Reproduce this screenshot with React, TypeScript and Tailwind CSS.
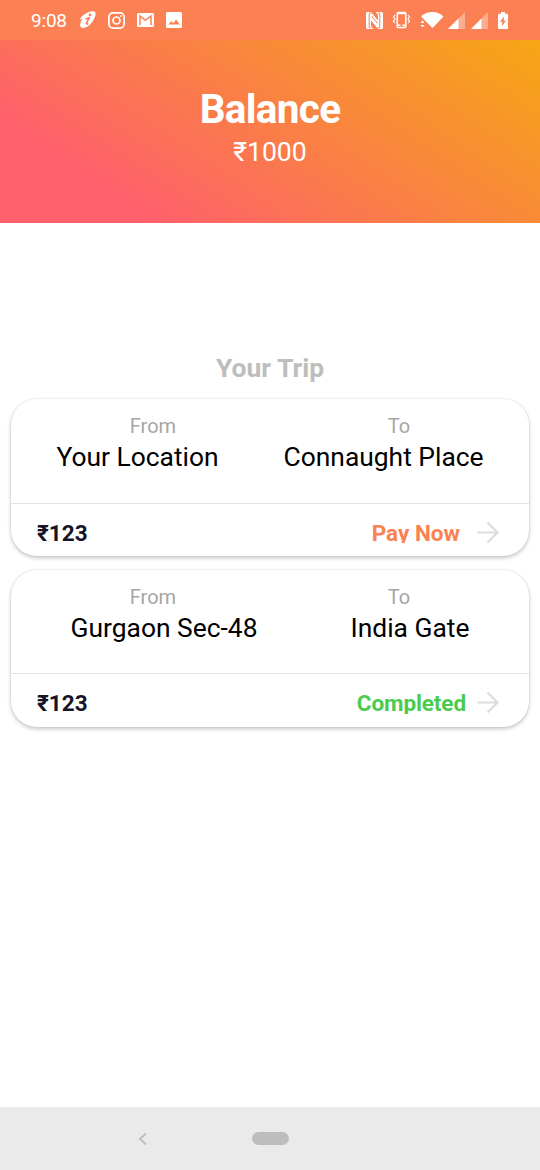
import React from "react";

type Trip = { from: string; to: string; fare: string; status: string; tone: string };

const trips: Trip[] = [
  { from: "Your Location", to: "Connaught Place", fare: "₹123", status: "Pay Now", tone: "text-[#f98253] mr-[1px] tracking-[0px]" },
  { from: "Gurgaon Sec-48", to: "India Gate", fare: "₹123", status: "Completed", tone: "text-[#4bcb4e] mr-[-5px] tracking-[-0.1px]" },
];

function StatusBar() {
  return (
    <div className="flex h-10 items-center bg-[#fb8155] pl-[31px] text-white">
      <span className="w-[37px] pt-px text-[19px] leading-[39px] tracking-[-0.2px]">9:08</span>
      <svg className="ml-[11px] h-[18px] w-[18px]" viewBox="0 0 18 18">
        <path d="M9 1.500C12 0 15.500 0 16.300 1.200c1.200 2.300-1.500 8.500-5 12C8 16.700 3.500 17.800 2 16.300.5 14.800 1.200 11 3.500 8L.8 8.500C2.500 5 5.500 2.800 9 1.500Z" fill="currentColor" />
        <path d="M6.500 8 10 6.800 7.700 12q-.5 1.800 1.500 .3" fill="none" stroke="#fb8155" strokeWidth="1.600" />
        <circle cx="11" cy="3.900" r="1.300" fill="#fb8155" />
      </svg>
      <svg className="ml-[11px] h-[17px] w-[17px]" viewBox="0 0 17 17" fill="none" stroke="currentColor" strokeWidth="1.700">
        <rect x=".9" y=".9" width="15.200" height="15.200" rx="4" />
        <circle cx="8.500" cy="8.500" r="3.500" />
        <circle cx="13" cy="4" r=".5" fill="currentColor" strokeWidth="1" />
      </svg>
      <svg className="ml-3 h-[14px] w-[17px]" viewBox="0 0 17 14">
        <rect width="17" height="14" rx="1.500" fill="currentColor" />
        <path d="M3 12V3L8.500 7.300 14 3v9" fill="none" stroke="#fb8155" strokeWidth="1.500" />
      </svg>
      <svg className="ml-3 h-[16px] w-[16px]" viewBox="0 0 16 16">
        <rect width="16" height="16" rx="1.500" fill="currentColor" />
        <path d="m2.500 12.500 2.800-3.500 2 2.300 2.800-3.800 3.700 5Z" fill="#fb8155" />
      </svg>
      <svg className="ml-[184px] h-[17px] w-[17px]" viewBox="0 0 17 17">
        <path d="M1.500 0H5l7 8.500V3.300L9.800 0H15.500Q17 0 17 1.500V15.500Q17 17 15.500 17H12L5 8.500v5.200L7.200 17H1.500Q0 17 0 15.500V1.500Q0 0 1.500 0Z" fill="currentColor" />
        <path d="M5.500 1.200H3.200v14.600h2M11.500 15.800h2.300V1.200h-2" fill="none" stroke="#fb8155" strokeWidth="1" />
        <path d="m5.500 4 6 7.300" stroke="#fb8155" strokeWidth="1" />
      </svg>
      <svg className="ml-[9px] h-[18px] w-[19px]" viewBox="0 0 19 18" fill="none" stroke="currentColor" strokeWidth="1.500">
        <rect x="5.200" y="1.500" width="8.600" height="15" rx="1" />
        <path d="M5 14.200h3.500M10.500 14.200H14M5 2.500h9" />
        <path d="m3 4-1.500 2L3 8l-1.500 2L3 12M16 4l1.500 2L16 8l1.500 2-1.500 2" strokeWidth="1.200" />
      </svg>
      <svg className="ml-[9px] h-[18px] w-[24px]" viewBox="0 0 24 18" fill="currentColor">
        <path d="M1 5.500C7.500-.4 17-.4 23.500 5.500L12.500 17Z" />
        <path d="m.5 12 2-2.500 2 2.500ZM.5 14h4l-2 2.500Z" />
      </svg>
      <svg className="ml-[4px] h-[17px] w-[17px]" viewBox="0 0 17 17" fill="currentColor">
        <path d="M0 17 17 0v17Z" opacity=".35" /><path d="M0 17 10.500 6.500V17Z" />
      </svg>
      <svg className="ml-[6px] h-[17px] w-[17px]" viewBox="0 0 17 17" fill="currentColor">
        <path d="M0 17 17 0v17Z" opacity=".35" /><path d="M0 17 10.500 6.500V17Z" />
      </svg>
      <svg className="ml-[10px] h-[17px] w-[10px]" viewBox="0 0 10 17">
        <path d="M3 0h4v1.700h2q1 0 1 1V16q0 1-1 1H1q-1 0-1-1V2.700q0-1 1-1h2Z" fill="currentColor" />
        <path d="m6 4.500-4 5.300h2.300l-.3 4.200 4-5.300H5.700Z" fill="#fb8155" />
      </svg>
    </div>
  );
}

function TripCard({ from, to, fare, status, tone }: Trip) {
  return (
    <article className="flex h-[157px] flex-col rounded-[26px] bg-white shadow-[0_2px_4px_rgba(0,0,0,0.22),0_0_2px_rgba(0,0,0,0.12)]">
      <div className="h-[104.500px] border-b border-[#e3e3e3] px-[13px] pt-[14px]">
        <div className="flex justify-around text-[20px] leading-[26px] text-[#a6a6a6]">
          <span>From</span>
          <span>To</span>
        </div>
        <div className="flex justify-around text-[26.400px] leading-9 text-black">
          <span>{from}</span>
          <span>{to}</span>
        </div>
      </div>
      <div className="flex flex-1 items-start pt-4 pr-[29px] pl-[26px] text-[22.500px] leading-[27px] font-bold">
        <span className="text-[#151527]">{fare}</span>
        <span className={"ml-auto h-[23.500px] overflow-hidden " + tone}>{status}</span>
        <svg className="ml-[15px] h-[26px] w-[24px]" viewBox="0 0 24 26" fill="none" stroke="#dcdce1" strokeWidth="2.200">
          <path d="M1.500 12.500h20M11.500 2.500l10 10-10 10" />
        </svg>
      </div>
    </article>
  );
}

export default function App() {
  return (
    <main className="flex h-[1170px] w-[540px] flex-col overflow-hidden bg-white font-['Roboto',sans-serif]">
      <StatusBar />
      <header className="h-[182.500px] bg-[linear-gradient(34deg,#ff606c_19%,#f98440_58%,#f7a614_100%)] pt-[45px] text-center text-white">
        <h1 className="text-[40.500px] leading-[48px] font-bold tracking-[-0.700px]">Balance</h1>
        <p className="text-[26.600px] leading-[37px]">₹1000</p>
      </header>
      <section className="mt-[128.500px] flex-1 px-[11px]">
        <h2 className="mb-[14px] text-center text-[26.500px] leading-[34px] font-bold text-[#bdbdbd]">Your Trip</h2>
        <div className="flex flex-col gap-[13.500px]">
          {trips.map((trip) => <TripCard key={trip.from} {...trip} />)}
        </div>
      </section>
      <nav className="flex h-[63px] items-center bg-[#eaeaea]">
        <svg className="ml-[138px] h-[14px] w-[10px]" viewBox="0 0 10 14" fill="none" stroke="#bdbdbd" strokeWidth="1.800">
          <path d="m8 1.500-6 5.500 6 5.500" />
        </svg>
        <div className="ml-[103.500px] h-[13px] w-[37px] rounded-full bg-[#bdbdbd]" />
      </nav>
    </main>
  );
}
